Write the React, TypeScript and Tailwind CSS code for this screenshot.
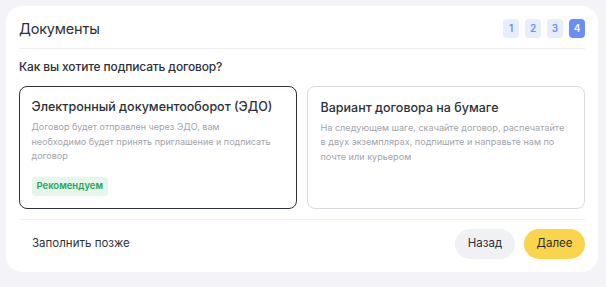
import React from "react";

export default function App() {
  const steps = [1, 2, 3, 4];
  return (
    <div className="w-[606px] h-[287px] bg-[#f4f4f8] p-[6px] pr-[8px]" style={{ fontFamily: "Inter, 'Noto Sans', sans-serif" }}>
      <div className="w-[592px] h-[266px] bg-white rounded-[16px] px-[13px] pt-[13px] pb-[13px] flex flex-col">
        <div className="flex items-center justify-between h-[19px]">
          <div className="text-[14.5px] leading-[19px] text-[#2c3038] tracking-[-0.2px]">Документы</div>
          <div className="flex gap-[6px]">
            {steps.map((s) => (
              <div
                key={s}
                className={
                  s === 4
                    ? "w-[16px] h-[19px] rounded-[4px] bg-[#6a8ef6] text-white text-[10px] font-semibold flex items-center justify-center"
                    : "w-[16px] h-[19px] rounded-[4px] bg-[#e6edfd] text-[#6a8ef6] text-[10px] font-semibold flex items-center justify-center"
                }
              >
                {s}
              </div>
            ))}
          </div>
        </div>
        <div className="mt-[10px] h-px bg-[#eeeff2]" />
        <div className="mt-[9px] text-[12px] leading-[18px] font-medium text-[#2c3038] tracking-[-0.15px]">Как вы хотите подписать договор?</div>
        <div className="mt-[10px] grid grid-cols-2 gap-[10px] h-[123px]">
          <div className="rounded-[8px] border-[1.5px] border-[#2e323a] px-[11.5px] pt-[12px] pb-[12px] flex flex-col items-start">
            <div className="text-[12.5px] leading-[16px] font-medium text-[#2c3038] whitespace-nowrap">Электронный документооборот (ЭДО)</div>
            <div className="mt-[5px] text-[9px] leading-[14.5px] text-[#9fa3ab] whitespace-nowrap">
              Договор будет отправлен через ЭДО, вам
              <br />
              необходимо будет принять приглашение и подписать
              <br />
              договор
            </div>
            <div className="mt-auto h-[19px] px-[5px] rounded-[4px] bg-[#e5f6ea] text-[#2aa35c] text-[9.5px] font-semibold flex items-center">
              Рекомендуем
            </div>
          </div>
          <div className="rounded-[8px] border border-[#d9dbe0] px-[12.5px] pt-[12.5px] pb-[12px] flex flex-col">
            <div className="text-[12.5px] leading-[16px] font-medium text-[#2c3038] whitespace-nowrap">Вариант договора на бумаге</div>
            <div className="mt-[5px] text-[9.1px] leading-[14.5px] text-[#9fa3ab] whitespace-nowrap">
              На следующем шаге, скачайте договор, распечатайте
              <br />
              в двух экземплярах, подпишите и направьте нам по
              <br />
              почте или курьером
            </div>
          </div>
        </div>
        <div className="mt-[10px] h-px bg-[#eeeff2]" />
        <div className="mt-[9px] flex items-center justify-between">
          <button className="h-[30px] px-[13px] text-[11.5px] text-[#2c3038]">Заполнить позже</button>
          <div className="flex gap-[9px]">
            <button className="h-[30px] w-[60px] rounded-full bg-[#f0f1f4] text-[11.5px] text-[#2c3038] flex items-center justify-center">Назад</button>
            <button className="h-[30px] w-[61px] rounded-full bg-[#fad44b] text-[11.5px] text-[#2c3038] flex items-center justify-center">Далее</button>
          </div>
        </div>
      </div>
    </div>
  );
}
